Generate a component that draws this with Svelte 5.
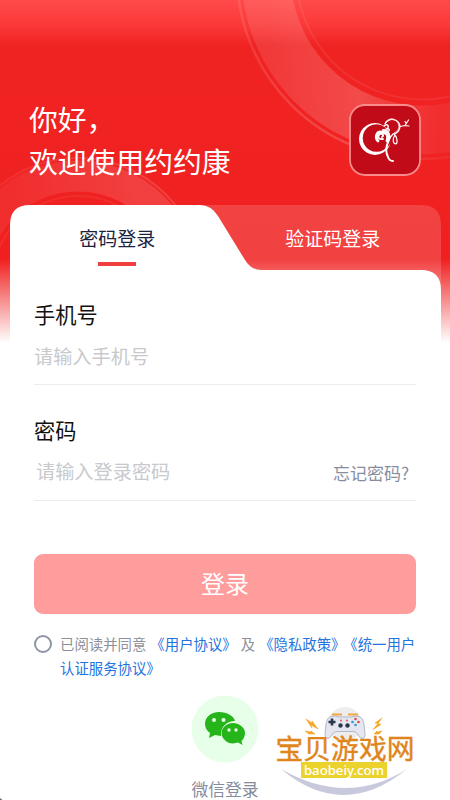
<script lang="ts">
	let tab = $state('password');
	let phone = $state('');
	let password = $state('');
	let agreed = $state(false);
</script>

<main>
	<svg class="backdrop" viewBox="0 0 450 350" aria-hidden="true">
		<defs>
			<linearGradient id="sky" x1="0" y1="0" x2="0" y2="1">
				<stop offset="0" stop-color="#ff4a4a" />
				<stop offset="0.07" stop-color="#fb3939" />
				<stop offset="0.13" stop-color="#f02323" />
				<stop offset="0.74" stop-color="#f02020" />
				<stop offset="0.98" stop-color="#fff" />
			</linearGradient>
			<linearGradient id="ring" x1="0" y1="0" x2="1" y2="0">
				<stop offset="0" stop-color="#fff" stop-opacity="0.1" />
				<stop offset="0.3" stop-color="#fff" stop-opacity="0.18" />
				<stop offset="0.56" stop-color="#fff" stop-opacity="0.05" />
			</linearGradient>
			<linearGradient id="ringSmall" x1="0" y1="0" x2="1" y2="0">
				<stop offset="0.2" stop-color="#fff" stop-opacity="0.06" />
				<stop offset="0.8" stop-color="#fff" stop-opacity="0.14" />
			</linearGradient>
		</defs>
		<rect width="450" height="350" fill="url(#sky)" />
		<g fill="none">
			<circle cx="422" cy="-26" r="156" stroke="url(#ring)" stroke-width="49" />
			<circle cx="422" cy="-26" r="185" stroke="url(#ring)" stroke-width="2.4" />
			<circle cx="422" cy="-26" r="125.5" stroke="#fff" stroke-opacity="0.07" stroke-width="2" />
			<path d="M-28 282a106 106 0 0 1 212 0" stroke="url(#ringSmall)" stroke-width="31" />
			<path d="M-46 282a124 124 0 0 1 248 0" stroke="url(#ringSmall)" stroke-width="2" />
			<path d="M-8 282a86 86 0 0 1 172 0" stroke="#fff" stroke-opacity="0.06" stroke-width="2" />
		</g>
	</svg>

	<header>
		<h1>你好，<br />欢迎使用约约康</h1>
		<svg class="logo" width="72" height="72" viewBox="0 0 72 72" aria-hidden="true">
			<rect x="1" y="1" width="70" height="70" rx="15" fill="#c10b18" stroke="#f98b8b" stroke-width="1.8" />
			<path
				d="M26 19a16 16 0 1 0 .01 0zM27.500 20.200a13.800 13.800 0 1 1-.01 0z"
				fill="#fff"
				fill-rule="evenodd"
			/>
			<path d="M38 41q5-7 1-14l6 1-3 11-5 6z" fill="#c10b18" />
			<g fill="none" stroke="#fff" stroke-linecap="round">
				<path d="M36 20c2-5 8-6 12-3 5 4 3 11-3 13" stroke-width="1.3" />
				<path d="M38 17c4-4 9-2 11 2 2 5 0 8-4 10" stroke-width="0.9" stroke="#f6c9cb" />
				<path d="M35 22c3-3 6 0 3 3M37 25c2-1 4 0 3 2" stroke-width="1.4" />
				<path d="M51 22.500l5-1 3.500-5.500M56 21.500l4 .5M57 19l-1-1.500" stroke-width="1.2" />
				<path d="M34 35c-5 1-6-3-3-5 3-1 4 2 2 3" stroke-width="1.8" />
				<path d="M29 37c-3-3-2-9 3-9 6 0 8 4 6 9" stroke-width="2.8" />
				<path d="M34 26c6 0 8 6 5 12-3 7-2 11 0 15 1 3 3 4 5 4" stroke-width="1.9" />
				<path d="M39 28c3 4 2 8-1 13M44 30c-3 3-5 7-7 15" stroke-width="1.2" />
				<path d="M45 30c3 2 4 9 2 10-3 0-4-5-1-9" stroke-width="1.2" />
			</g>
		</svg>
	</header>

	<section class="card">
		<svg class="shape" viewBox="0 0 431 150" aria-hidden="true">
			<path d="M180 0h231q20 0 20 20v80H180z" fill="#fff" fill-opacity="0.15" />
			<path
				d="M0 150V20Q0 0 20 0H190Q201 0 208 11L235 55Q241 65 251 65H411Q431 65 431 85V150z"
				fill="#fff"
			/>
		</svg>

		<nav class="tabs">
			<button class="tab" class:active={tab === 'password'} onclick={() => (tab = 'password')}>密码登录</button>
			<button class="tab" class:active={tab === 'code'} onclick={() => (tab = 'code')}>验证码登录</button>
		</nav>

		<form>
			<div class="field">
				<label for="phone">手机号</label>
				<div class="row">
					<input id="phone" type="tel" placeholder="请输入手机号" bind:value={phone} />
				</div>
			</div>
			<div class="field">
				<label for="password">密码</label>
				<div class="row inset">
					<input id="password" type="password" placeholder="请输入登录密码" bind:value={password} />
					<span class="forgot">忘记密码?</span>
				</div>
			</div>
			<button type="button" class="submit">登录</button>
		</form>
	</section>

	<div class="agreement">
		<button class="radio" class:checked={agreed} aria-label="同意" onclick={() => (agreed = !agreed)}></button>
		<p>已阅读并同意<b>《用户协议》</b><span class="and">及</span><b>《隐私政策》</b><b>《统一用户<br />认证服务协议》</b></p>
	</div>

	<footer>
		<svg width="68" height="68" viewBox="0 0 68 68" aria-hidden="true">
			<circle cx="34" cy="34" r="33.5" fill="#e7fee9" />
			<path
				d="M28 17c-8 0-14 5-14 12 0 4 2 7 5 9l-1 5 6-3 6 1c-1-9 6-15 14-15-1-5-8-9-16-9z"
				fill="#25b51a"
			/>
			<path
				d="M42 28c-6 0-11.500 4.500-11.500 10S36 48.500 42 48.500l5-1 4.500 2.500-1-4c2-2 3.500-4.500 3.500-8 0-5.500-6-10-12-10z"
				fill="#25b51a"
			/>
			<g fill="#e7fee9">
				<circle cx="23" cy="25" r="2" />
				<circle cx="32.5" cy="25" r="2" />
				<circle cx="38" cy="35" r="1.7" />
				<circle cx="45" cy="35" r="1.7" />
			</g>
		</svg>
		<span>微信登录</span>
	</footer>

	<aside class="watermark">
		<svg width="150" height="100" viewBox="0 0 150 100" aria-hidden="true">
			<circle cx="75" cy="24" r="17" fill="#ededed" />
			<path d="M11 69Q73 121 137 69Q77 107 11 69z" fill="#c8c9dc" />
			<path d="M62 14.5h10M78 14.5h10" stroke="#efa845" stroke-width="1.8" />
			<path
				d="M61 16.500q5-1 8 .5h12q4-1.500 8-.5 4 1 5 8l1 9q0 5-3 5-2 0-5-5-1-2-4-2H67q-3 0-4 2-3 5-5 5-3 0-3-5l1-9q1-7 5-8z"
				fill="#e4e7f0"
				stroke="#b4b7c8"
				stroke-width="1"
			/>
			<path d="M62 18.500v7M58.500 22h7" stroke="#29364b" stroke-width="2.6" />
			<g fill="#29364b">
				<circle cx="70.5" cy="25.5" r="2.2" />
				<circle cx="77.500" cy="25.5" r="2.2" />
			</g>
			<g fill="#e0484c">
				<circle cx="85.500" cy="19" r="1.3" />
				<circle cx="88.500" cy="22" r="1.3" />
				<circle cx="71" cy="20.5" r="0.9" />
				<circle cx="77" cy="20.5" r="0.9" />
			</g>
			<g fill="#3098d5">
				<circle cx="85.500" cy="25" r="1.3" />
				<circle cx="82.500" cy="22" r="1.3" />
			</g>
			<path
				d="m36 19 6 4v-2l6 8-7-4 1 3zM35 31l6 1v-1l4 3h-6zM112 18l-7 5 3 .5-5 6 8-5-3-1zM112 31l-5 1v-1l-3 3h5z"
				fill="#f5a624"
				stroke="#f5a624"
				stroke-width="0.6"
			/>
		</svg>
		<strong>宝贝游戏网</strong>
		<em>baobeiy.com</em>
	</aside>
</main>

<style>
	:global(body) {
		margin: 0;
		background: #fff;
	}

	main {
		position: relative;
		height: 800px;
		overflow: hidden;
		font-family: 'Noto Sans CJK SC', sans-serif;
		color: #111;
	}

	/* rounded corner of the screen */
	main::after {
		content: '';
		position: absolute;
		bottom: 0;
		left: 0;
		width: 2px;
		height: 3px;
		background: radial-gradient(circle at 100% 0, transparent 1.6px, #777 2.4px);
	}

	button,
	input {
		border: 0;
		padding: 0;
		background: none;
		font-family: inherit;
	}

	.backdrop {
		position: absolute;
		top: 0;
		left: 0;
		width: 450px;
		height: 350px;
	}

	header {
		position: relative;
		display: flex;
		justify-content: space-between;
		height: 205px;
		box-sizing: border-box;
		padding: 97.5px 29px 0;
	}

	h1 {
		margin: 0;
		font-size: 28.8px;
		font-weight: 400;
		line-height: 42.5px;
		color: #fff;
	}

	.logo {
		margin-top: 6.5px;
	}

	.card {
		position: relative;
		width: 431px;
		height: 417px;
		margin-left: 9.5px;
	}

	.shape {
		position: absolute;
		top: 0;
		left: 0;
		width: 431px;
		height: 150px;
	}

	.tabs {
		position: relative;
		display: grid;
		grid-template-columns: 1fr 1fr;
		height: 65px;
	}

	.tab {
		display: flex;
		flex-direction: column;
		align-items: center;
		padding-top: 19px;
		font-size: 19px;
		line-height: 28px;
		color: #fff;
	}

	.tab.active {
		color: #1b2340;
	}

	.tab.active::after {
		content: '';
		width: 38px;
		height: 4px;
		margin-top: 10px;
		background: #ef3f3f;
	}

	form {
		position: relative;
		padding: 29px 24.5px 0;
	}

	.field {
		height: 115.5px;
	}

	label {
		display: block;
		font-size: 21.2px;
		line-height: 30px;
	}

	.row {
		display: flex;
		align-items: center;
		justify-content: space-between;
		height: 55px;
		border-bottom: 1px solid #ececef;
	}

	.inset {
		padding: 0 7px 0 2px;
	}

	input {
		width: 200px;
		height: 30px;
		margin-bottom: 2px;
		font-size: 19.2px;
		outline: 0;
	}

	input::placeholder {
		color: #c8c9cc;
	}

	.forgot {
		font-size: 17px;
		color: #868e9e;
	}

	.submit {
		width: 382px;
		height: 60px;
		margin-top: 24px;
		padding-bottom: 4px;
		border-radius: 9px;
		background: #ff9c9c;
		font-size: 24px;
		color: #fff;
	}

	.agreement {
		display: flex;
		padding: 10px 30px 0 34px;
	}

	.radio {
		box-sizing: border-box;
		width: 18px;
		height: 18px;
		margin: 3px 8px 0 0;
		border: 2px solid #8e96a5;
		border-radius: 50%;
	}

	.radio.checked {
		background: #ef3f3f;
	}

	p {
		margin: 0;
		font-size: 14.4px;
		line-height: 24px;
		color: #8c909a;
		white-space: nowrap;
	}

	b {
		margin-left: 4px;
		font-weight: 400;
		color: #1f74e0;
	}

	b + b {
		margin-left: 5px;
	}

	.and {
		margin: 0 0 0 4px;
	}

	footer {
		display: flex;
		flex-direction: column;
		align-items: center;
		padding-top: 15px;
		font-size: 16.8px;
		line-height: 24px;
		color: #868b9e;
	}

	footer span {
		margin-top: 14px;
	}

	.watermark {
		position: absolute;
		top: 700px;
		left: 270px;
		display: flex;
		flex-direction: column;
		align-items: center;
		width: 150px;
	}

	.watermark svg {
		position: absolute;
		top: 0;
		left: 0;
	}

	strong {
		position: relative;
		margin-top: 32px;
		font-size: 27.8px;
		font-weight: 400;
		line-height: 30px;
		color: #e0851c;
		-webkit-text-stroke: 0.4px #e0851c;
		white-space: nowrap;
	}

	em {
		position: relative;
		width: 86px;
		margin: 0 2px 0 0;
		background: #ecd22d;
		font-family: 'Noto Sans', sans-serif;
		font-size: 13.2px;
		font-style: normal;
		font-weight: 500;
		line-height: 16px;
		text-align: center;
		color: #fff;
	}
</style>
